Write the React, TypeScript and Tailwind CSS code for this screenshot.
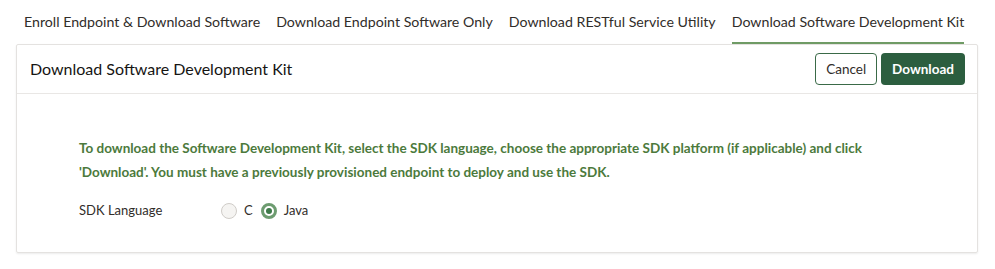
import { useState } from "react"

const tabs = [
  "Enroll Endpoint & Download Software",
  "Download Endpoint Software Only",
  "Download RESTful Service Utility",
  "Download Software Development Kit",
]

export default function App() {
  const [active, setActive] = useState(3)
  const [lang, setLang] = useState("java")

  return (
    <div className="w-[995px] h-[269px] bg-white font-['Lato',sans-serif] text-[#312d2a]">
      <div className="flex gap-4 pl-6 pt-[12px]">
        {tabs.map((t, i) => (
          <button
            key={t}
            onClick={() => setActive(i)}
            className={`shrink-0 whitespace-nowrap h-[32px] text-[14.2px] leading-[20px] pb-[10px] border-b-2 ${
              i === active ? "border-[#6f9b65]" : "border-transparent"
            }`}
          >
            {t}
          </button>
        ))}
      </div>

      <div className="ml-4 w-[962px] h-[209px] border border-[#e4e2e0] rounded-[2px] shadow-[0_1px_2px_rgba(0,0,0,0.08)]">
        <div className="flex items-center justify-between h-[49px] pl-[13px] pr-3 border-b border-[#e9e7e5]">
          <h2 className="text-[16px] text-[#161513]">Download Software Development Kit</h2>
          <div className="flex gap-1">
            <button className="h-[32px] px-[10px] rounded-[4px] border border-[#3a6a48] text-[13.5px] text-[#312d2a]">
              Cancel
            </button>
            <button className="h-[32px] px-[11px] rounded-[4px] bg-[#2c5e3f] text-[13.5px] font-bold text-white">
              Download
            </button>
          </div>
        </div>

        <div className="pl-[62px] pt-[42px]">
          <p className="text-[13.5px] font-bold leading-[24px] text-[#4c7a3c] max-w-[820px]">
            To download the Software Development Kit, select the SDK language, choose the appropriate SDK platform (if
            applicable) and click 'Download'. You must have a previously provisioned endpoint to deploy and use the SDK.
          </p>
          <div className="flex items-center mt-[17px] text-[13px]">
            <span className="w-[142px]">SDK Language</span>
            <label className="flex items-center gap-[7px] mr-[8px] cursor-pointer" onClick={() => setLang("c")}>
              <span
                className={`w-[16px] h-[16px] rounded-full flex items-center justify-center ${
                  lang === "c" ? "border-[3px] border-[#6d9c70]" : "border border-[#cfccc8] bg-[#f5f4f2]"
                }`}
              >
                {lang === "c" && <span className="w-[6px] h-[6px] rounded-full bg-[#3e7a4a]" />}
              </span>
              C
            </label>
            <label className="flex items-center gap-[7px] cursor-pointer" onClick={() => setLang("java")}>
              <span
                className={`w-[16px] h-[16px] rounded-full flex items-center justify-center ${
                  lang === "java" ? "border-[3px] border-[#6d9c70]" : "border border-[#cfccc8] bg-[#f5f4f2]"
                }`}
              >
                {lang === "java" && <span className="w-[6px] h-[6px] rounded-full bg-[#3e7a4a]" />}
              </span>
              Java
            </label>
          </div>
        </div>
      </div>
    </div>
  )
}
